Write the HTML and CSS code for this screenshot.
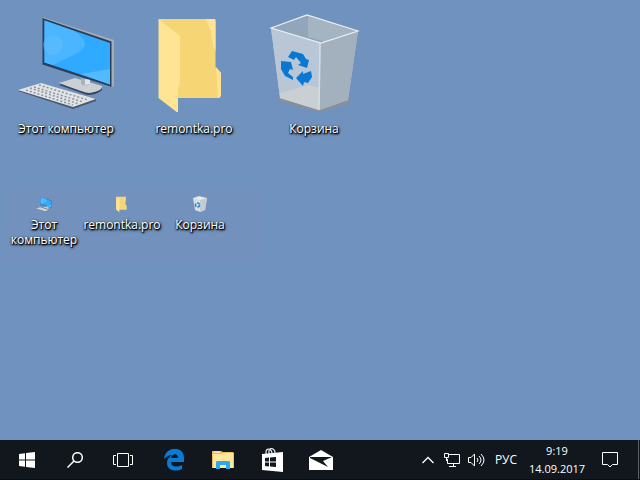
FILE: index.html
```html
<!DOCTYPE html>
<html lang="ru">
<head>
<meta charset="utf-8">
<title>Рабочий стол</title>
<link rel="stylesheet" href="styles.css">
</head>
<body>
<svg class="defs" aria-hidden="true">
  <symbol id="computer" viewBox="18 14 98 98">
    <path d="M44 17.500 46 18 115 40 115 86.500 112 87 44 64z" fill="#a5adb5"/>
    <path d="M43.500 18 112.500 41.500V87L43.500 64.500z" fill="#2b3d58"/>
    <path d="M45.500 20.500 111 43V84.500L45.500 62.500z" fill="#30aaff"/>
    <path d="M45.500 20.500 75 31C93 43 88 50 66 59L54 65 45.500 62.500z" fill="#4bb5ff"/>
    <circle cx="54" cy="45" r="10" fill="#63c0ff" opacity=".45"/>
    <path d="M82 74 111 69V84.500z" fill="#52baff"/>
    <path d="M60 85 88 95Q98 95 103 90V87L76 79z" fill="#36485f"/>
    <path d="M60 83 76 78 103 86Q104 91 90 93Q86 93 60 83z" fill="#cbd0d4"/>
    <path d="M82 78V84Q87 87 91 84V80z" fill="#aab1b8"/>
    <path d="M86 79V85L91 84V80z" fill="#e2e4e6"/>
    <path d="M19 91 74 109 97 101V99L43 84z" fill="#49596c"/>
    <path d="M19 90 42 83 97 99 74 107z" fill="#e1e3e5"/>
    <g stroke="#8996a2" stroke-width="1.500" stroke-dasharray="2 2">
      <path d="M40 85 89 100M35 87 84 102M31 88 80 104M27 90 74 105"/>
    </g>
  </symbol>
  <symbol id="folder" viewBox="145 14 98 98">
    <path d="M159 19H215.500V67L221 73V96L219 98H159z" fill="#f6d574"/>
    <path d="M206 19H214L215.500 21V51L213 45 211 32z" fill="#ffe496"/>
    <path d="M216 67 221 73V96L219 98H218z" fill="#ffe290"/>
    <path d="M158.500 19 180 36V84L178 88V113L158.500 98z" fill="#ffe496"/>
  </symbol>
  <symbol id="bin" viewBox="265 14 98 98">
    <path d="M279 98 318 108 349 100V103L319 112 280 101z" fill="#8f8e90"/>
    <path d="M271 28 307 15 358 31 348 100 319 110 280 98z" fill="#b7c5d5"/>
    <path d="M273 28 307 16V40L298 36z" fill="#8ca2bb"/>
    <path d="M307 16 356 31 321 43 273 28z" fill="#91a5bb"/>
    <path d="M308 16 356 31 326 42 308 37z" fill="#a5b4c2"/>
    <path d="M271 28 321 43 319 110 280 98z" fill="#b8c6d5"/>
    <path d="M321 43 358 31 348 100 319 110z" fill="#a3b0bd"/>
    <path d="M280 93 308 85 320 88 319 110 280 98z" fill="#c9cfd3"/>
    <path d="M271 28 307 15 358 31 321 43z" fill="none" stroke="#e9edf0" stroke-width="1.200"/>
    <path d="M320 43 319 110" stroke="#d5dde3" stroke-width="1.500"/>
    <g fill="#0878d4">
      <path d="M288 57 292 51 303 54 306 59 309 60 307 68 298 65 301 63 296 57 294 60z"/>
      <path d="M281 61 291 62 293 70 290 69 288 73 293 77V80L285 76 281 69z"/>
      <path d="M296 78 303 71V74L311 71 312 77 308 83 304 82 303 86z"/>
    </g>
  </symbol>
  <symbol id="bin-small" viewBox="0 0 18 16">
    <path d="M2 2 8 0 16 2 14 14 9 16 4 14z" fill="#d9dee3"/>
    <path d="M9 4 16 2 14 14 9 16z" fill="#c3cbd3"/>
    <path d="M4 2 8 1 14 2 9 4z" fill="#e9ecef"/>
    <circle cx="6.500" cy="9" r="2" fill="none" stroke="#2489d8" stroke-width="1.600" stroke-dasharray="3 1"/>
  </symbol>
</svg>

<main class="desktop">
  <section class="large" aria-label="Крупные значки">
    <a class="item" href="#"><svg><use href="#computer"/></svg><span>Этот компьютер</span></a>
    <a class="item" href="#"><svg><use href="#folder"/></svg><span>remontka.pro</span></a>
    <a class="item" href="#"><svg><use href="#bin"/></svg><span>Корзина</span></a>
  </section>
  <section class="small" aria-label="Мелкие значки">
    <a class="item" href="#"><svg><use href="#computer"/></svg><span>Этот компьютер</span></a>
    <a class="item" href="#"><svg><use href="#folder"/></svg><span>remontka.pro</span></a>
    <a class="item" href="#"><svg><use href="#bin-small"/></svg><span>Корзина</span></a>
  </section>
</main>

<footer class="taskbar">
  <div class="group">
    <button aria-label="Пуск"><svg width="16" height="16" viewBox="0 0 16 16" fill="#fff"><path d="M0 2 6 1.200V7.500H0zM7 1 16 0V7.500H7zM0 8.500H6V14.800L0 14zM7 8.500H16V16L7 15z"/></svg></button>
    <button aria-label="Поиск"><svg width="16" height="16" viewBox="0 0 16 16" fill="none" stroke="#fff" stroke-width="1.500"><circle cx="10.500" cy="5.500" r="4.800"/><path d="M7 9 .5 15.500"/></svg></button>
    <button aria-label="Представление задач"><svg width="20" height="16" viewBox="0 0 20 16" fill="none" stroke="#fff"><path d="M4.500 1.500H15.500V14.500H4.500zM3 3.500H.5V12.500H3M17 3.500H19.500V12.500H17"/></svg></button>
  </div>
  <div class="group apps">
    <button aria-label="Edge"><svg width="20" height="22" viewBox="0 0 20 22"><path d="M0 10C1-3 20-4 20 9V13H7C7 19 15 18 18 16V20C12 23 3 22 3 14Q3 9 8 6 4 6 0 10zM7 9H14C14 4 8 4 7 9z" fill="#087bd5" fill-rule="evenodd"/></svg></button>
    <button aria-label="Проводник"><svg width="22" height="18" viewBox="0 0 22 18"><path d="M0 0H9L11 1H21L22 2V17H0z" fill="#e9bd61"/><path d="M1 3H9L11 2H21V17H1z" fill="#ffe79b"/><path d="M2 1H8" stroke="#fff"/><path d="M4 18V11Q4 10 6 10H16Q18 10 18 11V18H14V14H8V18z" fill="#29a9f4"/></svg></button>
    <button aria-label="Магазин"><svg width="22" height="24" viewBox="0 0 22 24"><path d="M5 7V4C5 0 10 0 11 5M8 6V3C8-1 14 0 14 5" fill="none" stroke="#e6ebf1" stroke-width="1.200"/><path d="M1 6 22 4V24L1 22z" fill="#fff"/><path d="M4 10 8 9.500V13.500H4zM9 9.500 15 9V13.500H9zM4 14.500H8V18.500L4 18zM9 14.500H15V19L9 18.500z" fill="#11171d"/></svg></button>
    <button aria-label="Почта"><svg width="24" height="20" viewBox="0 0 24 20"><path d="M0 7 12 0 24 7V20H0z" fill="#fff"/><path d="M1 7H23L14 11 19 17 1 8z" fill="#11171d"/></svg></button>
  </div>
  <div class="tray">
    <button class="tray-button" aria-label="Скрытые значки"><svg width="12" height="8" viewBox="0 0 12 8" fill="none" stroke="#fff" stroke-width="1.300"><path d="M.5 7 6 1.500 11.500 7"/></svg></button>
    <button class="tray-button" aria-label="Сеть"><svg width="16" height="14" viewBox="0 0 16 14" fill="none" stroke="#fff"><path d="M5 1.500H15.500V10.500H3.500V6M9.500 11V13M5 13.500H12M.5.500H4.500V4.500H.5zM2.500 5V8"/></svg></button>
    <button class="tray-button" aria-label="Громкость"><svg width="17" height="14" viewBox="0 0 17 14" fill="none" stroke="#fff"><path d="M.5 4.500H3L6.500 1V13L3 9.500H.5zM9 5Q11 7 9 9M11 3Q15 7 11 11M13 1Q19 7 13 13"/></svg></button>
    <button class="language">РУС</button>
    <button class="clock"><time datetime="09:19">9:19</time><time datetime="2017-09-14">14.09.2017</time></button>
    <button class="notice" aria-label="Уведомления"><svg width="16" height="16" viewBox="0 0 16 16" fill="none" stroke="#fff"><path d="M.5.500H15.500V12.500H10.500L8 15 5.500 12.500H.5z"/></svg></button>
    <button class="show-desktop" aria-label="Свернуть все окна"></button>
  </div>
</footer>
</body>
</html>
```
FILE: styles.css
```css
* {
  box-sizing: border-box;
}

body {
  display: flex;
  flex-direction: column;
  min-height: 100vh;
  margin: 0;
  background: #7092be;
  color: #fff;
  font: 12px/15px "Open Sans", "Noto Sans", sans-serif;
}

.defs {
  position: absolute;
  width: 0;
  height: 0;
}

.desktop {
  flex: 1;
}

.large {
  display: grid;
  grid-template-columns: 132px 124px 116px;
  padding-top: 14px;
}

.item {
  display: flex;
  flex-direction: column;
  align-items: center;
  color: #fff;
  text-align: center;
  text-decoration: none;
  text-shadow: 1px 1px 1px #000, 0 1px 2px #000, 1px 1px 3px #000;
}

.large svg {
  width: 98px;
  height: 98px;
  overflow: visible;
}

.large .item {
  gap: 9px;
}

.small {
  display: grid;
  grid-template-columns: repeat(3, 78px);
  width: 256px;
  min-height: 76px;
  margin: 51px 0 0 5px;
  padding-top: 9px;
  background: #7291bd;
}

.small svg {
  width: 18px;
  height: 16px;
}

.small .item {
  gap: 5px;
}

.taskbar {
  display: flex;
  justify-content: space-between;
  height: 40px;
  background: #11171d;
  border-bottom: 1px solid #0b0f13;
}

button {
  display: flex;
  align-items: center;
  justify-content: center;
  margin: 0;
  padding: 0;
  border: 0;
  background: none;
  color: #fff;
  font: inherit;
}

.group,
.tray {
  display: flex;
}

.group {
  padding-left: 3px;
}

.group button {
  width: 48px;
}

.group.apps {
  flex: 1;
  padding-left: 2px;
}

.apps button {
  width: 49px;
}

.tray-button {
  width: 24px;
}

.language {
  width: 36px;
}

.clock {
  flex-direction: column;
  gap: 3px;
  width: 66px;
  font-size: 11px;
}

.notice {
  width: 40px;
}

.show-desktop {
  width: 2px;
  margin-left: 8px;
  border-left: 1px solid #59616a;
}
```
